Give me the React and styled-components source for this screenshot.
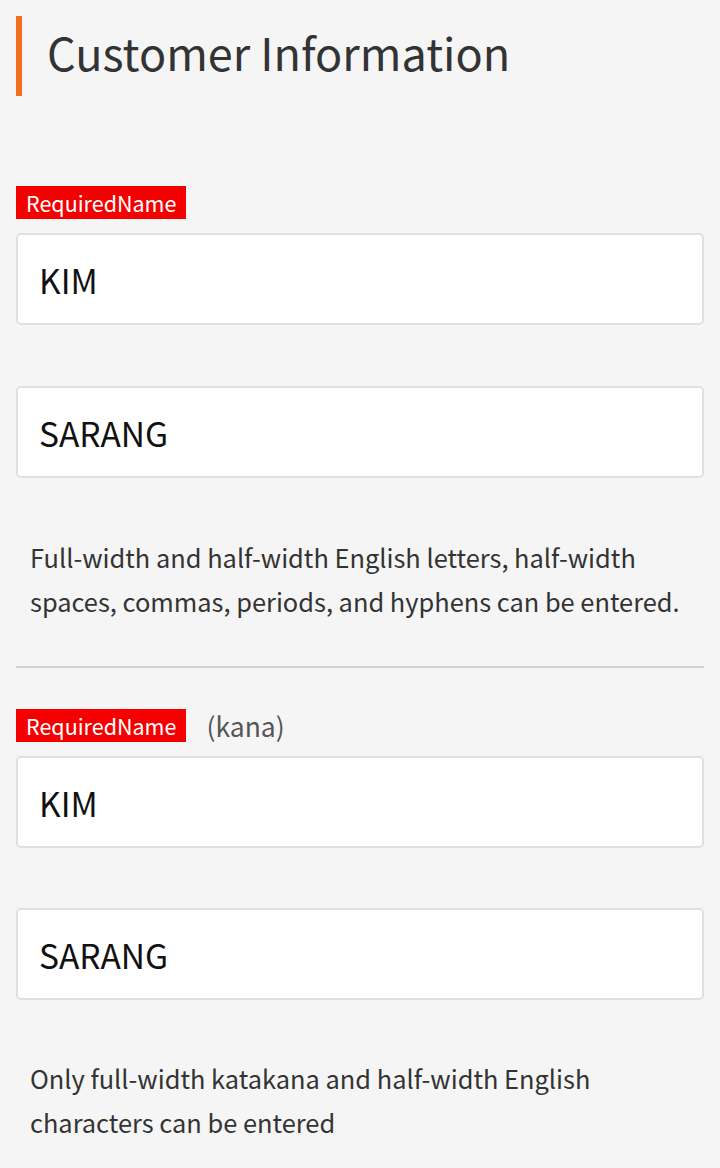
import React from 'react'
import styled, {createGlobalStyle} from 'styled-components'

const GlobalStyle = createGlobalStyle`
  body {
    margin: 0;
    background: #f5f5f5;
    font-family: "Noto Sans CJK KR", "Noto Sans", sans-serif;
    color: #333;
  }
`;

const Page = styled('div')`
  padding: 16px 16px 0;
  display: flex;
  flex-direction: column;
`;

const Title = styled('h2')`
  margin: 0;
  border-left: 6px solid #f26f1f;
  padding-left: 25px;
  height: 80px;
  display: flex;
  align-items: flex-start;
  font-size: 45px;
  font-weight: 400;
  line-height: 72px;
  color: #333;
`;

const Section = styled('div')`
  display: flex;
  flex-direction: column;
  padding-top: ${props => props.top}px;
`;

const LabelRow = styled('div')`
  display: flex;
  align-items: center;
  gap: 20px;
  height: 33px;
  margin-bottom: 14px;
`;

const Required = styled('span')`
  background: #f50000;
  color: #fff;
  font-size: 21.5px;
  height: 33px;
  line-height: 33px;
  padding: 0 10px;
`;

const Sub = styled('span')`
  font-size: 26.5px;
  line-height: 33px;
  color: #555;
`;

const Input = styled('input')`
  box-sizing: border-box;
  width: 100%;
  height: 92px;
  margin: 0 0 ${props => props.gap}px;
  padding: 0 21px;
  background: #fff;
  border: 2px solid #e0e0e0;
  border-radius: 5px;
  font-family: inherit;
  font-size: 33.5px;
  color: #111;
  outline: none;
`;

const Help = styled('p')`
  margin: 0;
  padding: 0 14px;
  font-size: 25.4px;
  line-height: 44px;
  color: #333;
`;

const Divider = styled('hr')`
  margin: 43px 0 41px;
  border: none;
  border-top: 2px solid #d4d4d4;
`;

const App = () => {
    return (
        <>
            <GlobalStyle/>
            <Page>
                <Title>Customer Information</Title>
                <Section top={90}>
                    <LabelRow>
                        <Required>RequiredName</Required>
                    </LabelRow>
                    <Input defaultValue="KIM" gap={61}/>
                    <Input defaultValue="SARANG" gap={57}/>
                    <Help>
                        Full-width and half-width English letters, half-width spaces, commas, periods, and hyphens can be entered.
                    </Help>
                </Section>
                <Divider/>
                <Section top={0}>
                    <LabelRow>
                        <Required>RequiredName</Required>
                        <Sub>(kana)</Sub>
                    </LabelRow>
                    <Input defaultValue="KIM" gap={60}/>
                    <Input defaultValue="SARANG" gap={56}/>
                    <Help>
                        Only full-width katakana and half-width English characters can be entered
                    </Help>
                </Section>
            </Page>
        </>
    )
}

export default App
